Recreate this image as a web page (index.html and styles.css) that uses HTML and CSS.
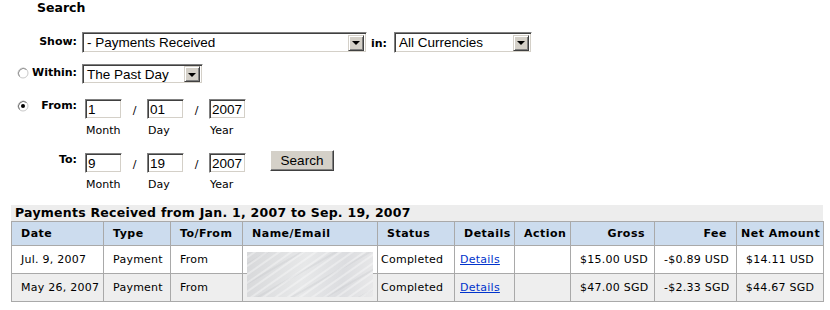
FILE: index.html
```html
<!DOCTYPE html>
<html lang="en">
  <head>
    <meta charset="UTF-8" />
    <title>History - Search</title>
    <link rel="stylesheet" href="styles.css">
  </head>
  <body>
    <div class="search">
      <h2>Search</h2>

      <div class="row show-row">
        <div class="label">Show:</div>
        <div class="select wide"><span class="value">- Payments Received</span><span class="arrow"></span></div>
        <span class="in">in:</span>
        <div class="select currency"><span class="value">All Currencies</span><span class="arrow"></span></div>
      </div>

      <div class="row within-row">
        <div class="label">
          <svg class="radio" width="12" height="12" viewBox="0 0 12 12">
            <circle cx="6" cy="6" r="5" fill="#fff" stroke="#c9c9c9" />
            <path d="M2.5 9.5 A5 5 0 0 1 9.5 2.5" fill="none" stroke="#8f8f8f" />
          </svg>
          <span>Within:</span>
        </div>
        <div class="select short"><span class="value">The Past Day</span><span class="arrow"></span></div>
      </div>

      <div class="row from-row">
        <div class="label">
          <svg class="radio" width="12" height="12" viewBox="0 0 12 12">
            <circle cx="6" cy="6" r="5" fill="#fff" stroke="#c9c9c9" />
            <path d="M2.5 9.5 A5 5 0 0 1 9.5 2.5" fill="none" stroke="#6f6f6f" />
            <circle cx="6" cy="6" r="2" fill="#000" />
          </svg>
          <span>From:</span>
        </div>
        <div class="date">
          <div class="field"><input type="text" value="1" /><span>Month</span></div>
          <span class="slash">/</span>
          <div class="field"><input type="text" value="01" /><span>Day</span></div>
          <span class="slash">/</span>
          <div class="field"><input type="text" value="2007" /><span>Year</span></div>
        </div>
      </div>

      <div class="row to-row">
        <div class="label">To:</div>
        <div class="date">
          <div class="field"><input type="text" value="9" /><span>Month</span></div>
          <span class="slash">/</span>
          <div class="field"><input type="text" value="19" /><span>Day</span></div>
          <span class="slash">/</span>
          <div class="field"><input type="text" value="2007" /><span>Year</span></div>
        </div>
        <button class="go">Search</button>
      </div>
    </div>

    <div class="results">
      <h3 class="title">Payments Received from Jan. 1, 2007 to Sep. 19, 2007</h3>
      <table>
        <colgroup>
          <col class="c-date" />
          <col class="c-type" />
          <col class="c-to" />
          <col class="c-name" />
          <col class="c-status" />
          <col class="c-details" />
          <col class="c-action" />
          <col class="c-gross" />
          <col class="c-fee" />
          <col class="c-net" />
        </colgroup>
        <thead>
          <tr>
            <th>Date</th>
            <th>Type</th>
            <th>To/From</th>
            <th>Name/Email</th>
            <th>Status</th>
            <th>Details</th>
            <th>Action</th>
            <th class="num">Gross</th>
            <th class="num">Fee</th>
            <th class="mid">Net Amount</th>
          </tr>
        </thead>
        <tbody>
          <tr>
            <td>Jul. 9, 2007</td>
            <td>Payment</td>
            <td>From</td>
            <td class="name"><div class="blur"></div></td>
            <td class="status">Completed</td>
            <td class="details"><a href="#">Details</a></td>
            <td></td>
            <td class="num">$15.00 USD</td>
            <td class="num">-$0.89 USD</td>
            <td class="mid">$14.11 USD</td>
          </tr>
          <tr class="alt">
            <td>May 26, 2007</td>
            <td>Payment</td>
            <td>From</td>
            <td class="name"></td>
            <td class="status">Completed</td>
            <td class="details"><a href="#">Details</a></td>
            <td></td>
            <td class="num">$47.00 SGD</td>
            <td class="num">-$2.33 SGD</td>
            <td class="mid">$44.67 SGD</td>
          </tr>
        </tbody>
      </table>
    </div>
  </body>
</html>
```

FILE: styles.css
```css
* {
  box-sizing: border-box;
}

body {
  margin: 0;
  font-family: "DejaVu Sans", Verdana, sans-serif;
  font-size: 11px;
  color: #000;
  background: #fff;
}

h2 {
  margin: 0 0 0 37px;
  font-size: 12.5px;
  line-height: 16px;
}

/* search form */

.row {
  display: flex;
  align-items: flex-start;
}

.label {
  width: 77px;
  display: flex;
  justify-content: flex-end;
  align-items: center;
  font-weight: bold;
  line-height: 13px;
  margin-right: 5px;
}

.label .radio {
  margin-right: auto;
  margin-left: 17px;
}

.show-row {
  margin-top: 16px;
}

.show-row .label {
  margin-top: 3px;
}

.within-row {
  margin-top: 11px;
}

.within-row .label {
  margin-top: 2px;
}

.from-row {
  margin-top: 15px;
}

.to-row {
  margin-top: 16px;
}

.select {
  display: flex;
  align-items: center;
  justify-content: space-between;
  height: 21px;
  padding: 0 2px 0 3px;
  background: #fff;
  border: 1px solid;
  border-color: #808080 #fff #fff #808080;
  box-shadow: inset 1px 1px 0 #404040, inset -1px -1px 0 #d4d0c8;
  font-family: "Liberation Sans", Arial, sans-serif;
  font-size: 13.5px;
}

.select .value {
  padding-left: 1px;
}

.wide {
  width: 285px;
}

.currency {
  width: 138px;
  margin-left: 7px;
}

.short {
  width: 121px;
  height: 20px;
}

.arrow {
  width: 16px;
  height: 16px;
  display: flex;
  align-items: center;
  justify-content: center;
  background: #d4d0c8;
  border: 1px solid;
  border-color: #d4d0c8 #404040 #404040 #d4d0c8;
  box-shadow: inset 1px 1px 0 #fff, inset -1px -1px 0 #808080;
}

.arrow::after {
  content: "";
  border-left: 4px solid transparent;
  border-right: 4px solid transparent;
  border-top: 4px solid #000;
  margin-top: 1px;
}

.in {
  margin: 5px 0 0 4px;
  font-weight: bold;
  line-height: 13px;
}

.date {
  display: flex;
  align-items: flex-start;
  margin-left: 3px;
}

.field {
  display: flex;
  flex-direction: column;
}

.field input {
  width: 37px;
  height: 20px;
  padding: 1px 2px 0;
  border: 1px solid;
  border-color: #808080 #fff #fff #808080;
  box-shadow: inset 1px 1px 0 #404040, inset -1px -1px 0 #d4d0c8;
  font-family: "Liberation Sans", Arial, sans-serif;
  font-size: 13.5px;
  outline: none;
}

.field span {
  margin-top: 5px;
  padding-left: 1px;
  line-height: 13px;
}

.slash {
  width: 25px;
  text-align: center;
  line-height: 13px;
  margin-top: 5px;
}

.go {
  width: 64px;
  height: 21px;
  margin: -3px 0 0 24px;
  padding: 0;
  background: #d4d0c8;
  border: 1px solid;
  border-color: #fff #404040 #404040 #fff;
  box-shadow: inset -1px -1px 0 #808080;
  font-family: "Liberation Sans", Arial, sans-serif;
  font-size: 13.5px;
  color: #000;
}

/* results table */

.results {
  margin: 14px 0 0 11px;
  width: 812px;
}

.title {
  margin: 0;
  padding: 0 4px;
  height: 16px;
  background: #ededed;
  font-size: 12.5px;
  letter-spacing: 0.25px;
  line-height: 16px;
}

table {
  width: 812px;
  table-layout: fixed;
  border-collapse: collapse;
}

.c-date { width: 92px; }
.c-type { width: 67px; }
.c-to { width: 72px; }
.c-name { width: 135px; }
.c-status { width: 77px; }
.c-details { width: 60px; }
.c-action { width: 56px; }
.c-gross { width: 84px; }
.c-fee { width: 82px; }
.c-net { width: 87px; }

th,
td {
  border: 1px solid #a9a9a9;
  text-align: left;
  white-space: nowrap;
}

th {
  height: 24px;
  padding: 0 9px;
  background: #ccdcee;
  letter-spacing: 0.5px;
}

td {
  height: 28px;
  padding: 0 9px;
  letter-spacing: 0.25px;
}

.alt td {
  background: #eeeeee;
}

th.num,
td.num {
  text-align: right;
}

th.mid,
td.mid {
  text-align: center;
  padding: 0 4px;
}

td.status {
  padding: 0 3px;
}

td.details {
  padding-left: 5px;
}

td.details a {
  color: #0033cc;
}

td.name {
  position: relative;
}

.blur {
  position: absolute;
  z-index: 1;
  left: 4px;
  top: 6px;
  width: 126px;
  height: 45px;
  background:
    repeating-linear-gradient(145deg, rgba(255, 255, 255, 0) 0 3px, rgba(255, 255, 255, 0.35) 4px 5px, rgba(255, 255, 255, 0) 6px 7px),
    repeating-linear-gradient(150deg, rgba(190, 192, 196, 0) 0 9px, rgba(190, 192, 196, 0.25) 10px 11px, rgba(190, 192, 196, 0) 12px 17px),
    linear-gradient(100deg, #d7d8da, #e7e8e9 45%, #dcdde0 75%, #e9e9ea);
}
```
